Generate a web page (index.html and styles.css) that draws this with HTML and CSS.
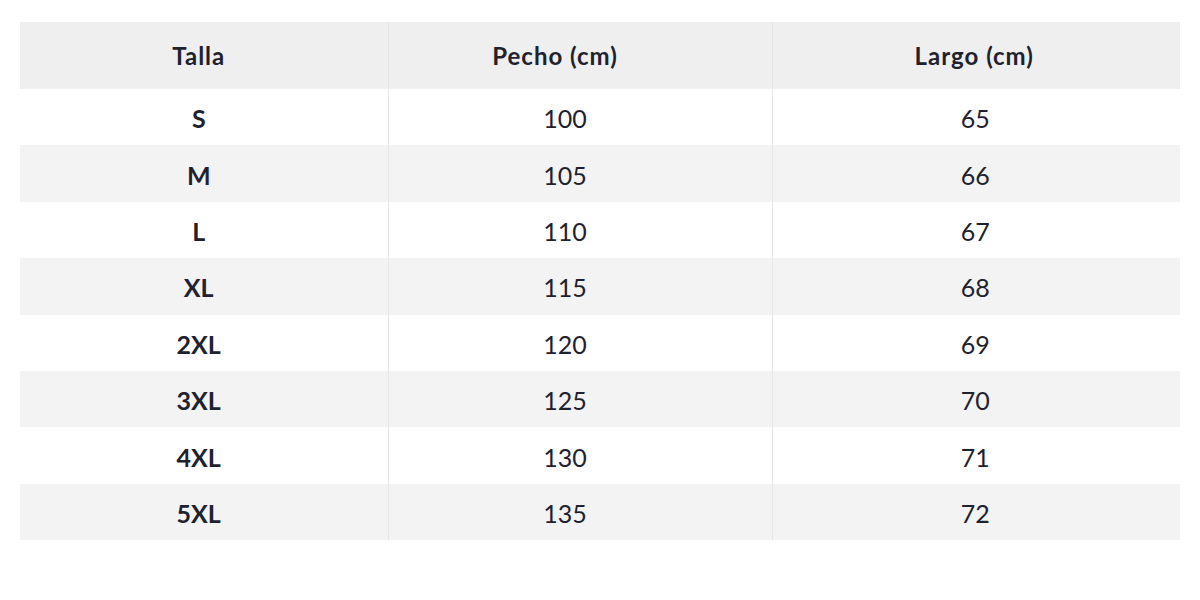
FILE: index.html
```html
<!DOCTYPE html>
<html lang="es">
<head>
<meta charset="utf-8">
<link rel="stylesheet" href="styles.css">
</head>
<body>
<table class="sizes">
  <colgroup>
    <col class="c1"><col class="c2"><col class="c3">
  </colgroup>
  <thead>
    <tr><th class="h1">Talla</th><th class="h2">Pecho (cm)</th><th class="h3">Largo (cm)</th></tr>
  </thead>
  <tbody>
    <tr><td class="size">S</td><td class="chest">100</td><td class="len">65</td></tr>
    <tr><td class="size">M</td><td class="chest">105</td><td class="len">66</td></tr>
    <tr><td class="size">L</td><td class="chest">110</td><td class="len">67</td></tr>
    <tr><td class="size">XL</td><td class="chest">115</td><td class="len">68</td></tr>
    <tr><td class="size">2XL</td><td class="chest">120</td><td class="len">69</td></tr>
    <tr><td class="size">3XL</td><td class="chest">125</td><td class="len">70</td></tr>
    <tr><td class="size">4XL</td><td class="chest">130</td><td class="len">71</td></tr>
    <tr><td class="size">5XL</td><td class="chest">135</td><td class="len">72</td></tr>
  </tbody>
</table>
</body>
</html>
```
FILE: styles.css
```css
html, body {
  margin: 0;
  background: #ffffff;
}
body {
  padding: 22px 20px;
  font-family: Lato, "Liberation Sans", sans-serif;
  color: #1e2230;
}
.sizes {
  width: 1160px;
  border-collapse: collapse;
  table-layout: fixed;
}
.c1 { width: 368px; }
.c2 { width: 384px; }
.c3 { width: 408px; }
.sizes th, .sizes td {
  text-align: center;
  padding: 0;
  border-left: 1px solid #e6e6e6;
}
.sizes th:first-child, .sizes td:first-child {
  border-left: none;
}
.sizes th {
  height: 67px;
  background: #efefef;
  font-size: 24px;
  font-weight: 700;
  letter-spacing: 1px;
}
.sizes .h1 { padding-right: 10px; }
.sizes .h2 { padding-right: 50px; }
.sizes .h3 { padding-right: 4px; }
.sizes td {
  height: 54.4px;
  font-size: 25px;
  font-weight: 400;
  padding-top: 2px;
}
.sizes td.size {
  font-weight: 700;
  padding-right: 10px;
}
.sizes td.chest { padding-right: 30px; }
.sizes td.len { padding-right: 2px; }
.sizes tbody tr:nth-child(even) td {
  background: #f3f3f3;
}
```
